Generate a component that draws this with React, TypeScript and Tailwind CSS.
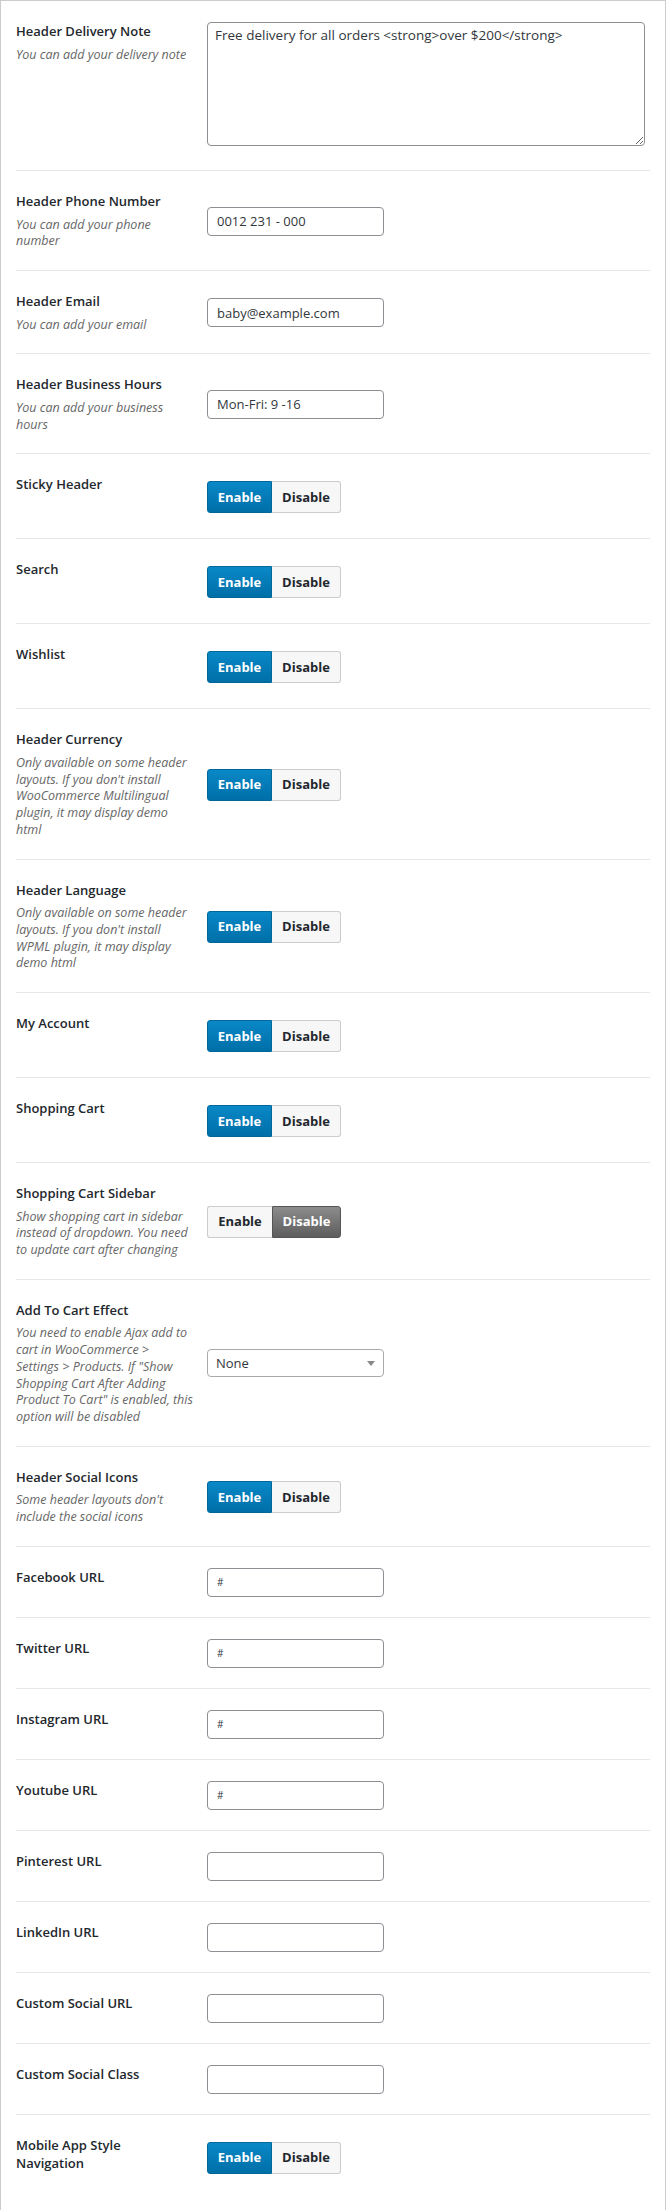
import type { ReactNode } from "react"

// Theme options panel: header settings

function Toggle({ on }: { on: boolean }) {
  return (
    <div className="mt-[6px] mb-[5px] flex h-[32px] w-[134px] text-[13px] font-bold leading-none">
      <span
        className={
          on
            ? "flex w-[65px] items-center justify-center rounded-l-[3px] border border-[#006799] bg-linear-to-b from-[#0a88c7] to-[#006fa8] text-white"
            : "flex w-[65px] items-center justify-center rounded-l-[3px] border border-r-0 border-[#cccccc] bg-[#f7f7f7] text-[#23282d]"
        }
      >
        Enable
      </span>
      <span
        className={
          on
            ? "flex w-[69px] items-center justify-center rounded-r-[3px] border border-l-0 border-[#cccccc] bg-[#f7f7f7] text-[#23282d]"
            : "flex w-[69px] items-center justify-center rounded-r-[3px] border border-[#555555] bg-linear-to-b from-[#8c8c8c] to-[#5e5e5e] text-white"
        }
      >
        Disable
      </span>
    </div>
  )
}

function TextInput({ value = "", small = false }: { value?: string; small?: boolean }) {
  return (
    <input
      readOnly
      defaultValue={value}
      className={
        "block h-[29px] w-[177px] rounded-[4px] border border-[#8c8f94] bg-white px-[9px] text-[#32373c] outline-none " +
        (small ? "text-[10px]" : "text-[13px]")
      }
    />
  )
}

function Select({ value }: { value: string }) {
  return (
    <div className="flex h-[28px] w-[177px] items-center justify-between rounded-[4px] border border-[#aaaaaa] bg-white pl-[8px] pr-[8px] text-[13px] text-[#32373c]">
      <span>{value}</span>
      <svg width="8" height="5" viewBox="0 0 8 5" className="mt-[1px]">
        <path d="M0 0h8L4 5z" fill="#888888" />
      </svg>
    </div>
  )
}

function Row({
  label,
  desc = [],
  children,
  last = false,
}: {
  label: ReactNode
  desc?: string[]
  children: ReactNode
  last?: boolean
}) {
  return (
    <div className={"flex " + (last ? "" : "border-b border-[#e6e6e6]")}>
      <div className="w-[191px] shrink-0 pt-[21px] pb-[20px] pr-2">
        <div className="text-[13px] font-semibold leading-[18px] text-[#23282d]">{label}</div>
        {desc.length > 0 && (
          <div className="mt-[6.5px] text-[12.5px] italic leading-[16.75px] text-[#666666]">
            {desc.map((line) => (
              <div key={line} className="whitespace-nowrap">
                {line}
              </div>
            ))}
          </div>
        )}
      </div>
      <div className="flex-1 self-center pt-[21px] pb-[20px]">{children}</div>
    </div>
  )
}

export default function App() {
  return (
    <div className="min-h-[2210px] bg-white font-['Open_Sans',sans-serif]">
      <div className="border border-[#cccccc] px-[15px] pb-[12px]">
        <Row label="Header Delivery Note" desc={["You can add your delivery note"]}>
          <textarea
            readOnly
            defaultValue="Free delivery for all orders <strong>over $200</strong>"
            className="mb-[4px] block h-[124px] w-[438px] resize-y rounded-[4px] border border-[#8c8f94] bg-white px-[7px] py-[3px] text-[13.5px] leading-[18px] text-[#32373c] outline-none"
          />
        </Row>
        <Row label="Header Phone Number" desc={["You can add your phone", "number"]}>
          <TextInput value="0012 231 - 000" />
        </Row>
        <Row label="Header Email" desc={["You can add your email"]}>
          <TextInput value="baby@example.com" />
        </Row>
        <Row label="Header Business Hours" desc={["You can add your business", "hours"]}>
          <TextInput value="Mon-Fri: 9 -16" />
        </Row>
        <Row label="Sticky Header">
          <Toggle on />
        </Row>
        <Row label="Search">
          <Toggle on />
        </Row>
        <Row label="Wishlist">
          <Toggle on />
        </Row>
        <Row
          label="Header Currency"
          desc={[
            "Only available on some header",
            "layouts. If you don't install",
            "WooCommerce Multilingual",
            "plugin, it may display demo",
            "html",
          ]}
        >
          <Toggle on />
        </Row>
        <Row
          label="Header Language"
          desc={[
            "Only available on some header",
            "layouts. If you don't install",
            "WPML plugin, it may display",
            "demo html",
          ]}
        >
          <Toggle on />
        </Row>
        <Row label="My Account">
          <Toggle on />
        </Row>
        <Row label="Shopping Cart">
          <Toggle on />
        </Row>
        <Row
          label="Shopping Cart Sidebar"
          desc={[
            "Show shopping cart in sidebar",
            "instead of dropdown. You need",
            "to update cart after changing",
          ]}
        >
          <Toggle on={false} />
        </Row>
        <Row
          label="Add To Cart Effect"
          desc={[
            "You need to enable Ajax add to",
            "cart in WooCommerce >",
            "Settings > Products. If \"Show",
            "Shopping Cart After Adding",
            "Product To Cart\" is enabled, this",
            "option will be disabled",
          ]}
        >
          <Select value="None" />
        </Row>
        <Row label="Header Social Icons" desc={["Some header layouts don't", "include the social icons"]}>
          <Toggle on />
        </Row>
        <Row label="Facebook URL">
          <TextInput value="#" small />
        </Row>
        <Row label="Twitter URL">
          <TextInput value="#" small />
        </Row>
        <Row label="Instagram URL">
          <TextInput value="#" small />
        </Row>
        <Row label="Youtube URL">
          <TextInput value="#" small />
        </Row>
        <Row label="Pinterest URL">
          <TextInput />
        </Row>
        <Row label="LinkedIn URL">
          <TextInput />
        </Row>
        <Row label="Custom Social URL">
          <TextInput />
        </Row>
        <Row label="Custom Social Class">
          <TextInput />
        </Row>
        <Row
          last
          label={
            <>
              Mobile App Style
              <br />
              Navigation
            </>
          }
        >
          <Toggle on />
        </Row>
      </div>
    </div>
  )
}
